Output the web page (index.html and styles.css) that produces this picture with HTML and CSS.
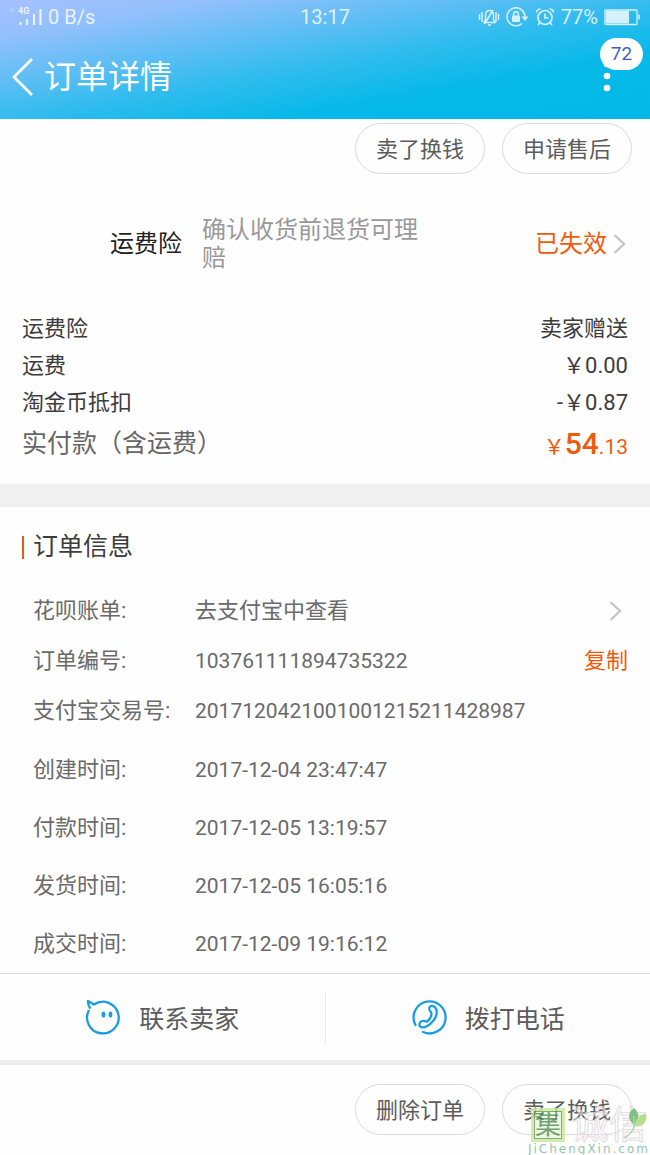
FILE: index.html
```
<!DOCTYPE html>
<html lang="zh-CN">
<head>
<meta charset="utf-8">
<meta name="viewport" content="width=device-width, initial-scale=1">
<title>订单详情</title>
<link rel="stylesheet" href="styles.css">
</head>
<body>
<header class="header">
  <div class="status">
    <div class="status-left">
      <svg class="signal" width="32" height="20" viewBox="0 0 32 20" aria-hidden="true">
        <circle cx="2" cy="3" r="2" fill="#fff" opacity=".25"/>
        <path d="M10.500 15v3M17 12v6M24 7v11M30.500 2v16" stroke="#fff" stroke-width="2.200" fill="none"/>
      </svg>
      <span class="network">4G</span>
      <span>0 B/s</span>
    </div>
    <time class="clock">13:17</time>
    <div class="status-right">
      <svg width="22" height="20" viewBox="0 0 22 20" fill="none" stroke="#fff" stroke-width="1.500" aria-hidden="true">
        <path d="M1.500 7v6M4 5v10M18 5v10M20.500 7v6"/>
        <path d="M6 15.500h11l-1.500-3V8.500c0-3-1.500-5-4-5s-4 2-4 5v4zM10 18h3M15 3L6.500 17"/>
      </svg>
      <svg width="23" height="20" viewBox="0 0 23 20" aria-hidden="true">
        <path d="M16 16.500A9 9 0 1 1 19 10" fill="none" stroke="#fff" stroke-width="1.500"/>
        <path d="M15.500 9.500h7l-3.500 4.500z" fill="#fff"/>
        <rect x="6" y="8.500" width="8" height="6.500" rx="1" fill="#fff"/>
        <path d="M7.700 9V7a2.300 2.300 0 0 1 4.600 0v2" fill="none" stroke="#fff" stroke-width="1.500"/>
      </svg>
      <svg width="20" height="20" viewBox="0 0 20 20" fill="none" stroke="#fff" stroke-width="1.700" aria-hidden="true">
        <circle cx="10" cy="10.500" r="7"/>
        <path d="M10 6.500v4.500h3.500M1.500 5.500c0-2 2-3.500 4-3.500M18.500 5.500c0-2-2-3.500-4-3.500M4.500 16l-1.500 2M15.500 16l1.500 2"/>
      </svg>
      <span>77%</span>
      <svg width="36" height="17" viewBox="0 0 36 17" aria-hidden="true">
        <rect x="1" y="1" width="32" height="14.500" rx="1" fill="none" stroke="#fff" stroke-width="1.300"/>
        <rect x="2" y="2" width="23" height="12.500" fill="#fff"/>
        <path d="M35 5.500v5" stroke="#fff" stroke-width="1.500"/>
      </svg>
    </div>
  </div>
  <nav class="nav">
    <button class="back" type="button" aria-label="返回">
      <svg width="22" height="40" viewBox="0 0 22 40"><path d="M20 2L2 20l18 18" fill="none" stroke="#fff" stroke-width="2.800"/></svg>
    </button>
    <h1 class="title">订单详情</h1>
    <button class="more" type="button" aria-label="更多">
      <svg width="8" height="32" viewBox="0 0 8 32" fill="#fff"><circle cx="4" cy="3" r="3.300"/><circle cx="4" cy="15" r="3.300"/><circle cx="4" cy="27" r="3.300"/></svg>
      <span class="badge">72</span>
    </button>
  </nav>
</header>
<main>
  <section class="summary">
    <div class="actions">
      <button class="pill" type="button">卖了换钱</button>
      <button class="pill" type="button">申请售后</button>
    </div>
    <a class="insurance" href="#">
      <span class="insurance-name">运费险</span>
      <span class="insurance-note">确认收货前退货可理赔</span>
      <span class="insurance-state">已失效</span>
      <svg class="chevron" width="13" height="20" viewBox="0 0 13 20"><path d="M1.500 1l9.500 9-9.500 9" fill="none" stroke="#c4c4c4" stroke-width="2.200"/></svg>
    </a>
    <dl class="fees">
      <div class="fee"><dt>运费险</dt><dd>卖家赠送</dd></div>
      <div class="fee"><dt>运费</dt><dd>￥0.00</dd></div>
      <div class="fee"><dt>淘金币抵扣</dt><dd>-￥0.87</dd></div>
      <div class="fee total"><dt>实付款（含运费）</dt><dd class="price">￥<strong>54</strong>.13</dd></div>
    </dl>
  </section>
  <section class="info">
    <h2 class="info-title">订单信息</h2>
    <dl class="rows">
      <div class="row"><dt>花呗账单:</dt><dd><a class="bill" href="#">去支付宝中查看<svg class="chevron" width="13" height="20" viewBox="0 0 13 20"><path d="M1.500 1l9.500 9-9.500 9" fill="none" stroke="#c4c4c4" stroke-width="2.200"/></svg></a></dd></div>
      <div class="row"><dt>订单编号:</dt><dd class="number">103761111894735322</dd><dd><button class="copy" type="button">复制</button></dd></div>
      <div class="row"><dt>支付宝交易号:</dt><dd class="number">2017120421001001215211428987</dd></div>
      <div class="row date"><dt>创建时间:</dt><dd class="number">2017-12-04 23:47:47</dd></div>
      <div class="row date"><dt>付款时间:</dt><dd class="number">2017-12-05 13:19:57</dd></div>
      <div class="row date"><dt>发货时间:</dt><dd class="number">2017-12-05 16:05:16</dd></div>
      <div class="row date"><dt>成交时间:</dt><dd class="number">2017-12-09 19:16:12</dd></div>
    </dl>
  </section>
  <div class="contact">
    <button class="contact-button" type="button">
      <svg width="36" height="36" viewBox="0 0 36 36" fill="none" stroke="#1a9ce0" stroke-width="2.300" stroke-linejoin="round" aria-hidden="true">
        <path d="M4 11A15.800 15.800 0 1 0 9 5.500L3 2c-.2 3 .8 5.500 2.500 7.500"/>
        <ellipse cx="18.500" cy="15.500" rx="1.900" ry="3" fill="#1a9ce0" stroke="none"/><ellipse cx="25.500" cy="15.500" rx="1.900" ry="3" fill="#1a9ce0" stroke="none"/>
      </svg>
      <span>联系卖家</span>
    </button>
    <button class="contact-button" type="button">
      <svg width="36" height="36" viewBox="0 0 36 36" fill="none" stroke="#1a9ce0" stroke-width="2.300" stroke-linejoin="round" stroke-linecap="round" aria-hidden="true">
        <path d="M4.500 26A16 16 0 1 1 12 33"/>
        <path d="M18.500 11c-1-4 2-5 4.500-3.500 4 2.500 3.500 9-.5 14-4 5-9.500 8-12.500 6.500-2.500-1.500-2-5 1-6 2-.5 3 .7 5 .5 3-2 4.500-5 4.500-8 0-1.500-1.500-2-2-3.500z"/>
      </svg>
      <span>拨打电话</span>
    </button>
  </div>
</main>
<footer class="footer">
  <button class="pill" type="button">删除订单</button>
  <button class="pill" type="button">卖了换钱</button>
  <div class="watermark">
    <div class="mark-name">
      <span class="mark-box">集</span><span class="mark-outline">诚信</span>
      <svg class="leaf" width="28" height="34" viewBox="0 0 28 34" aria-hidden="true">
        <path d="M12 18C5 12 6 5 12 1c6 5 5 11 1 17z" fill="#5fb568"/>
        <path d="M13 19c0-7 4-12 11-12 2 7-3 13-11 12z" fill="#a9d772"/>
        <path d="M12 9v10c0 4-4 9-10 12" fill="none" stroke="#9acb91" stroke-width="1.500"/>
      </svg>
    </div>
    <span class="mark-site">JiChengXin.com</span>
  </div>
</footer>
</body>
</html>
```
FILE: styles.css
```
* { box-sizing: border-box; }
body {
  margin: 0;
  background: #fefefe;
  color: #3c3c3c;
  font-family: Roboto, "Noto Sans CJK SC", sans-serif;
  font-size: 22px;
}
button {
  border: 0;
  padding: 0;
  background: none;
  color: inherit;
  font: inherit;
}
a { color: inherit; text-decoration: none; }
h1, h2, dl, dd { margin: 0; font-weight: 400; }
svg { display: block; flex: none; }

.header {
  background: linear-gradient(170deg, #a6c0ff 0%, #93c0fc 16%, #30bcee 52%, #06b9e8 72%, #04b8e7 100%);
  color: #fff;
}
.status {
  display: grid;
  grid-template-columns: 1fr auto 1fr;
  align-items: center;
  height: 34px;
  padding: 0 10px;
  font-size: 20px;
  opacity: .8;
}
.status-left { position: relative; display: flex; align-items: center; gap: 6px; }
.network { position: absolute; left: 8px; top: 1px; font-size: 9px; line-height: 10px; font-weight: 700; }
.status-right { display: flex; align-items: center; justify-content: flex-end; gap: 6px; }
.nav { display: flex; align-items: center; height: 85px; padding: 0 39px 0 12px; }
.title { margin-left: 10px; font-size: 32px; line-height: 40px; }
.more { position: relative; margin-left: auto; }
.badge {
  position: absolute;
  top: -23px;
  left: -3px;
  width: 43px;
  border-radius: 16px;
  background: #fff;
  color: #3c62c0;
  font-size: 19px;
  line-height: 32px;
}

.summary { padding: 4px 22px 14px; }
.actions { display: flex; justify-content: flex-end; gap: 17px; margin-right: -4px; }
.pill {
  width: 130px;
  height: 51px;
  padding-bottom: 4px;
  border: 1px solid #dadada;
  border-radius: 26px;
  color: #5c5c5c;
}
.insurance {
  display: flex;
  align-items: center;
  padding: 42px 2px 38px 88px;
  font-size: 24px;
  line-height: 28px;
}
.insurance-name { color: #222; }
.insurance-note { width: 218px; margin-left: 20px; color: #999; }
.insurance-state { margin-left: auto; color: #f05a0c; }
.chevron { margin-left: 6px; }
.fee { display: flex; justify-content: space-between; line-height: 37px; }
.total { color: #666; font-size: 25px; line-height: 46px; }
.price { color: #f05a0c; font-size: 21px; }
.price strong { font-size: 30px; font-weight: 500; }

.info { border-top: 23px solid #f0f0f0; padding: 27px 22px 0; }
.info-title {
  display: flex;
  align-items: center;
  gap: 9px;
  font-size: 25px;
  line-height: 26px;
}
.info-title::before { content: ""; width: 2px; height: 23px; background: #f05a0c; }
.rows { padding: 26px 0 0 11px; color: #6a6a6a; }
.row { display: flex; align-items: center; line-height: 50px; }
.row dt { flex: none; width: 162px; }
.row dd:nth-child(2) { flex: 1; }
.date { line-height: 58px; }
.date:nth-child(4) { padding-top: 5px; }
.number { font-size: 21px; }
.bill { display: flex; align-items: center; justify-content: space-between; padding-right: 6px; }
.copy { color: #f05a0c; }

.contact {
  display: flex;
  align-items: center;
  height: 92px;
  border-top: 1px solid #d8d8d8;
  border-bottom: 5px solid #eee;
}
.contact-button {
  flex: 1;
  display: flex;
  align-items: center;
  justify-content: center;
  gap: 18px;
  height: 52px;
  color: #5c5c5c;
  font-size: 25px;
}
.contact-button + .contact-button { border-left: 1px solid #e8e8e8; }

.footer {
  position: relative;
  display: flex;
  justify-content: flex-end;
  gap: 17px;
  padding: 19px 18px 20px;
}
.watermark { position: absolute; right: 0; bottom: 0; opacity: .8; }
.mark-name { position: relative; display: flex; align-items: center; gap: 6px; padding-left: 3px; }
.mark-box {
  width: 34px;
  border: 3px solid #c9e89a;
  outline: 1px solid #5d9a5c;
  outline-offset: -4px;
  background: #d8f0b480;
  color: #4f8a57;
  font-size: 26px;
  line-height: 28px;
  text-align: center;
}
.mark-outline {
  color: #fff9;
  font-size: 38px;
  line-height: 36px;
  -webkit-text-stroke: 1px #ddd3da;
}
.leaf { position: absolute; right: 0; top: 0; }
.mark-site {
  display: block;
  color: #79b893;
  font-family: "DejaVu Sans", sans-serif;
  font-size: 12px;
  line-height: 12px;
  letter-spacing: 2px;
}
```
